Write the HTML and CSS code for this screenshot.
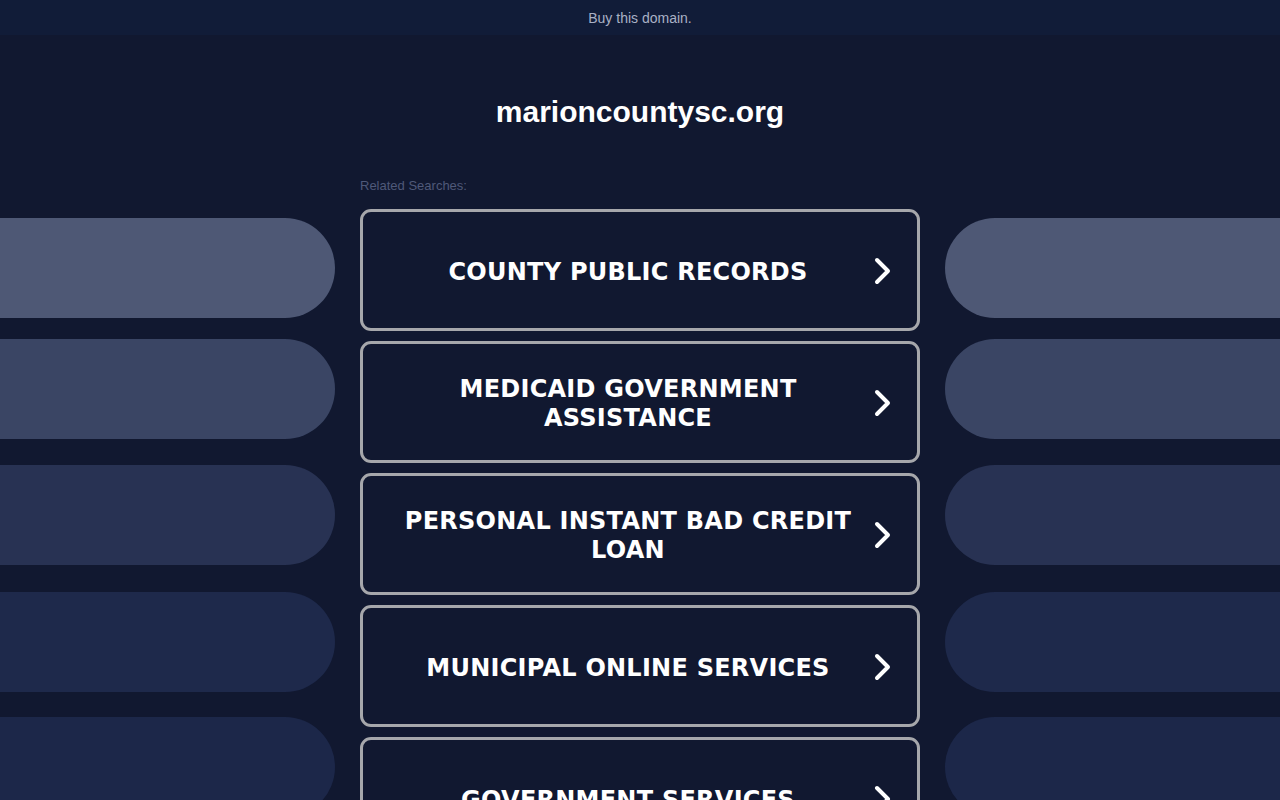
FILE: index.html
```html
<!DOCTYPE html>
<html>
<head>
<meta charset="utf-8">
<link rel="stylesheet" href="styles.css">
</head>
<body>
<div class="pills" aria-hidden="true">
  <div class="pill l p1"></div><div class="pill r p1"></div>
  <div class="pill l p2"></div><div class="pill r p2"></div>
  <div class="pill l p3"></div><div class="pill r p3"></div>
  <div class="pill l p4"></div><div class="pill r p4"></div>
  <div class="pill l p5"></div><div class="pill r p5"></div>
</div>
<div class="topbar"><a href="#">Buy this domain.</a></div>
<main class="main">
  <h1 class="domain">marioncountysc.org</h1>
  <div class="related">Related Searches:</div>
  <div class="list">
    <a class="item" href="#"><span class="label">COUNTY PUBLIC RECORDS</span><svg class="chev" viewBox="0 0 20 28"><path d="M4 3 L15 14 L4 25"/></svg></a>
    <a class="item" href="#"><span class="label">MEDICAID GOVERNMENT ASSISTANCE</span><svg class="chev" viewBox="0 0 20 28"><path d="M4 3 L15 14 L4 25"/></svg></a>
    <a class="item" href="#"><span class="label">PERSONAL INSTANT BAD CREDIT LOAN</span><svg class="chev" viewBox="0 0 20 28"><path d="M4 3 L15 14 L4 25"/></svg></a>
    <a class="item" href="#"><span class="label">MUNICIPAL ONLINE SERVICES</span><svg class="chev" viewBox="0 0 20 28"><path d="M4 3 L15 14 L4 25"/></svg></a>
    <a class="item" href="#"><span class="label">GOVERNMENT SERVICES</span><svg class="chev" viewBox="0 0 20 28"><path d="M4 3 L15 14 L4 25"/></svg></a>
  </div>
</main>
</body>
</html>
```
FILE: styles.css
```css
html, body {
  margin: 0;
  padding: 0;
}
body {
  background: #111830;
  font-family: "Liberation Sans", Arial, sans-serif;
  height: 800px;
  overflow: hidden;
  position: relative;
}
.pills {
  position: absolute;
  inset: 0;
  z-index: 0;
}
.pill {
  position: absolute;
  height: 100px;
  width: 335px;
}
.pill.l { left: 0; border-radius: 0 50px 50px 0; }
.pill.r { left: 945px; border-radius: 50px 0 0 50px; }
.p1 { top: 218px; background: #4e5875; }
.p2 { top: 339px; background: #3a4564; }
.p3 { top: 465px; background: #283253; }
.p4 { top: 592px; background: #1e294b; }
.p5 { top: 717px; background: #1c2749; }

.topbar {
  position: relative;
  z-index: 1;
  height: 35px;
  background: #111c38;
  display: flex;
  align-items: center;
  justify-content: center;
}
.topbar a {
  color: #a9b1c5;
  font-size: 14px;
  line-height: 16px;
  margin-top: 1px;
  text-decoration: none;
}
.main {
  position: relative;
  z-index: 1;
  width: 560px;
  margin: 0 auto;
}
.domain {
  margin: 0;
  padding-top: 59px;
  height: 36px;
  line-height: 36px;
  text-align: center;
  color: #ffffff;
  font-size: 30px;
  font-weight: bold;
}
.related {
  margin-top: 49px;
  color: #4f5979;
  font-size: 13px;
  line-height: 14px;
  height: 14px;
}
.list {
  margin-top: 16px;
  display: flex;
  flex-direction: column;
  gap: 10px;
}
.item {
  box-sizing: border-box;
  height: 122px;
  border: 3px solid #a6a7ab;
  border-radius: 11px;
  display: flex;
  align-items: center;
  text-decoration: none;
  padding: 4px 24px 0 30px;
}
.label {
  flex: 1;
  text-align: center;
  color: #ffffff;
  font-family: "DejaVu Sans", Verdana, sans-serif;
  font-weight: bold;
  font-size: 24px;
  line-height: 29px;
  letter-spacing: 0.25px;
}
.chev {
  width: 20px;
  height: 28px;
  flex: none;
  margin-left: 10px;
  margin-top: -2px;
}
.chev path {
  fill: none;
  stroke: #ffffff;
  stroke-width: 4;
  stroke-linecap: round;
  stroke-linejoin: round;
}
```
